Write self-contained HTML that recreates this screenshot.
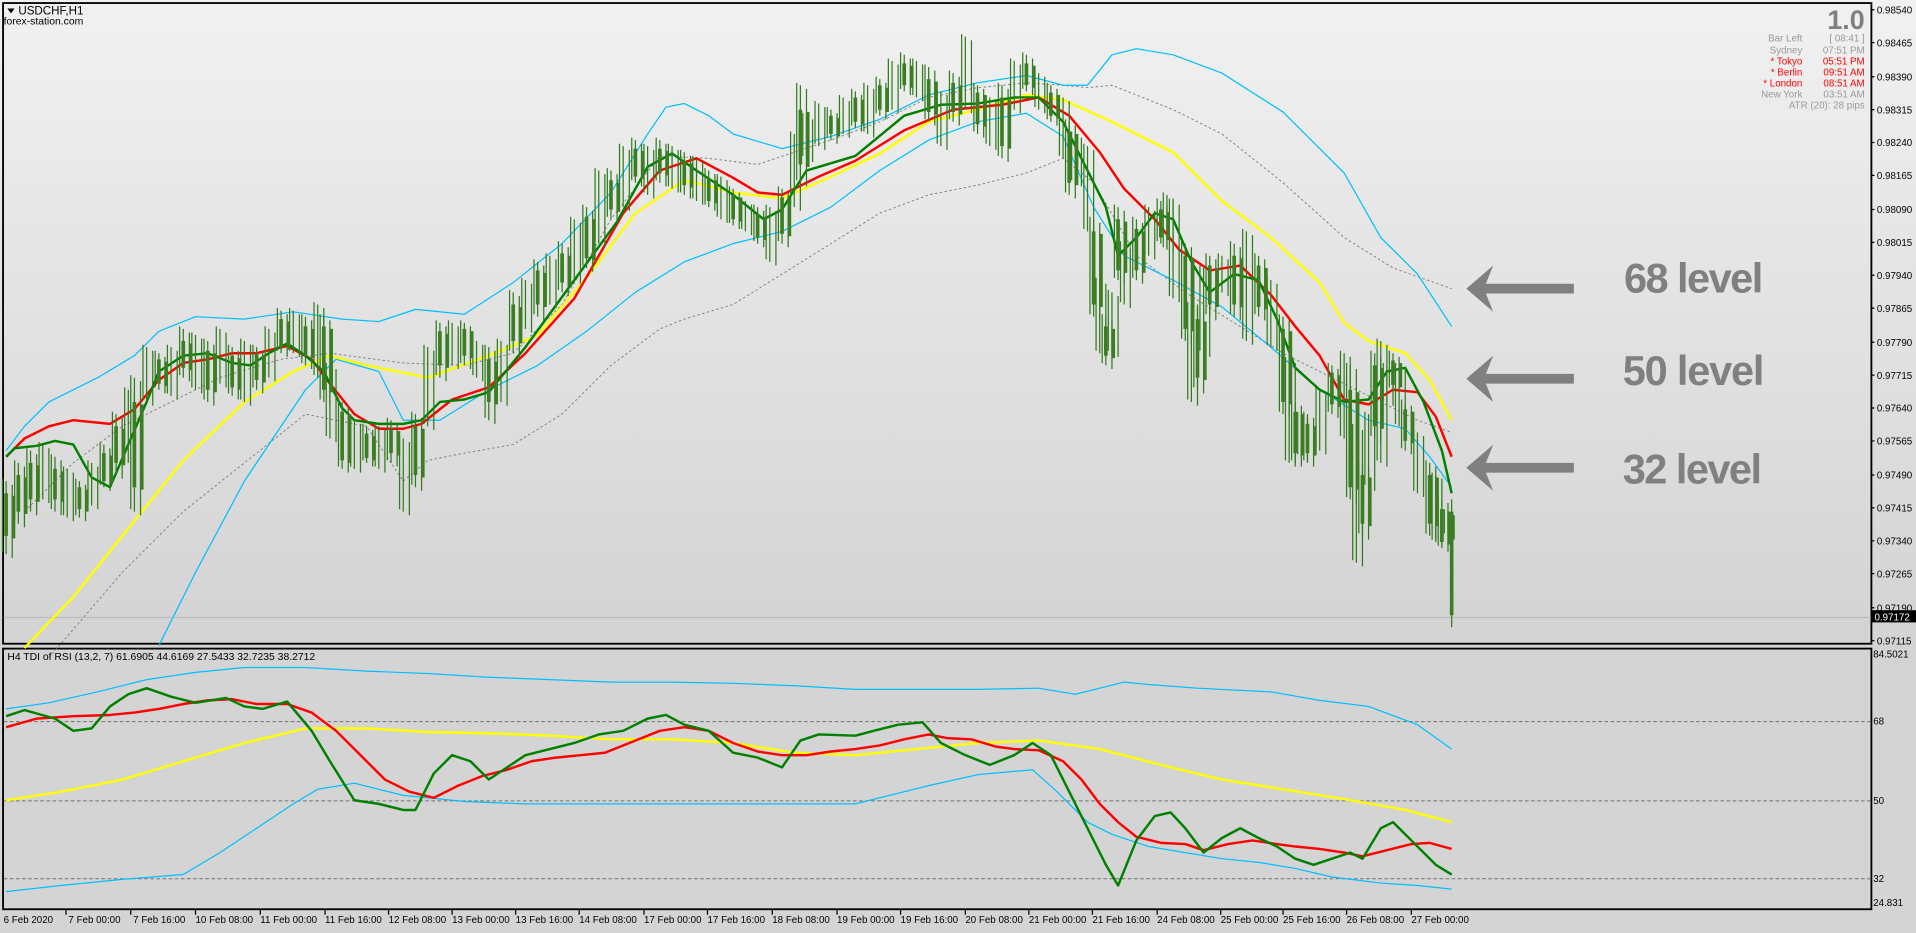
<!DOCTYPE html>
<html><head><meta charset="utf-8"><style>
html,body{margin:0;padding:0;width:1916px;height:933px;overflow:hidden;background:#d4d4d4}
svg{display:block}
text{font-family:"Liberation Sans",sans-serif}
</style></head><body>
<svg width="1916" height="933" viewBox="0 0 1568 766" preserveAspectRatio="none" xmlns="http://www.w3.org/2000/svg">
<defs><linearGradient id="bg" x1="0" y1="0" x2="0" y2="1"><stop offset="0" stop-color="#f1f1f1"/><stop offset="1" stop-color="#d3d3d3"/></linearGradient></defs>
<rect x="0" y="0" width="1568" height="531" fill="url(#bg)"/>
<rect x="0" y="531" width="1568" height="235" fill="#d4d4d4"/>
<rect x="2.5" y="2.5" width="1529" height="526" fill="none" stroke="#000" stroke-width="1.5"/>
<rect x="2.5" y="532.5" width="1529" height="214" fill="none" stroke="#000" stroke-width="1.5"/>
<line x1="3" y1="507" x2="1531" y2="507" stroke="#bdbdbd" stroke-width="1"/>
<g fill="none" stroke-linejoin="round">
<polyline stroke="#808080" stroke-width="0.8" stroke-dasharray="2,2" points="20,420 60,380 100,350 140,330 180,310 230,295 270,290 330,298 380,300 420,290 460,250 500,180 540,128 580,130 620,135 680,115 720,100 760,80 800,72 840,68 870,70 890,72 910,70 960,90 1000,110 1050,150 1100,195 1140,220 1188,237"/>
<polyline stroke="#808080" stroke-width="0.8" stroke-dasharray="2,2" points="40,540 100,470 150,420 200,380 250,340 300,350 330,395 350,378 380,372 420,365 460,340 500,300 540,270 560,262 600,250 640,225 680,200 720,175 760,160 800,152 840,142 870,130 895,150 930,210 970,240 1010,265 1050,290 1090,310 1130,330 1160,345 1188,355"/>
<polyline stroke="#00bfff" stroke-width="1" points="5,370 20,350 40,330 80,310 110,292 130,272 160,260 200,262 240,256 280,262 310,264 340,254 380,258 420,232 460,200 500,158 530,110 545,88 560,85 580,95 600,110 640,122 680,112 720,98 760,78 800,68 840,62 870,70 890,70 910,45 930,40 960,45 1000,60 1050,92 1100,142 1130,195 1160,225 1188,268"/>
<polyline stroke="#00bfff" stroke-width="1" points="130,530 160,470 200,395 250,320 275,295 310,305 330,345 360,345 400,320 440,300 480,272 520,240 560,215 600,200 640,190 680,170 720,140 760,115 800,100 840,93 870,112 895,170 920,210 960,230 1000,252 1040,285 1080,320 1120,345 1150,352 1170,375 1188,400"/>
<polyline stroke="#ffff00" stroke-width="2" points="20,532 60,490 100,440 150,378 200,330 240,305 270,292 300,300 350,310 400,292 440,275 480,228 520,175 560,148 600,158 640,163 680,145 720,126 760,100 800,90 840,78 870,82 910,100 960,125 1000,165 1040,195 1080,232 1100,265 1120,280 1150,290 1170,312 1188,345"/>
<polyline stroke="#ff0000" stroke-width="2" points="5,375 20,360 40,350 60,345 90,348 110,336 130,312 150,298 170,295 190,290 210,290 235,284 255,295 270,315 290,340 310,352 330,352 345,348 370,328 400,318 430,290 470,245 510,175 540,140 570,130 600,146 620,158 640,160 670,145 700,132 740,107 780,90 820,86 850,80 875,95 900,125 920,155 945,180 965,205 990,222 1015,218 1040,242 1060,268 1080,292 1100,328 1120,332 1140,320 1160,322 1175,342 1188,375"/>
<polyline stroke="#008000" stroke-width="2" points="5,375 12,368 30,366 45,362 60,365 75,392 90,400 105,365 120,330 130,305 150,292 170,290 190,298 205,300 220,290 235,282 250,292 265,305 280,335 290,345 310,348 330,348 345,345 360,330 380,328 400,322 430,285 470,230 505,182 530,137 550,126 570,140 600,160 625,180 640,172 660,140 700,128 740,95 770,86 800,85 830,80 850,80 870,100 890,140 905,170 915,210 930,195 945,175 960,180 975,215 990,240 1010,225 1030,230 1045,262 1060,302 1080,320 1100,330 1120,328 1135,305 1150,302 1165,330 1180,370 1188,405"/>
</g>
<path id="wk" fill="none" stroke="#2f7a1d" stroke-width="1" d="M5 395V455M15 380V430M25 370V420M35 365V410M45 375V420M55 385V425M65 395V425M75 380V415M85 365V400M95 340V390M105 320V380M110 310V420M120 285V330M130 290V320M140 285V325M150 270V310M160 275V320M170 280V330M180 270V315M190 285V325M200 280V330M210 285V320M220 270V310M230 255V290M240 255V290M250 260V300M260 250V310M265 260V330M270 300V360M280 330V385M290 345V385M300 350V380M310 350V385M320 345V380M330 360V420M340 340V400M350 285V350M360 265V310M370 265V300M380 265V300M390 280V310M400 285V345M410 280V330M420 240V290M430 230V270M440 215V260M450 210V250M460 200V240M470 180V230M480 170V220M490 140V200M500 140V180M510 120V170M520 115V150M530 120V160M540 115V150M550 120V155M560 125V160M570 130V165M580 140V170M590 145V180M600 155V185M610 165V190M620 170V200M630 170V215M640 155V200M650 110V170M655 70V150M660 95V130M670 85V120M680 90V115M690 80V110M700 75V105M710 70V110M720 65V95M730 50V90M740 45V75M750 50V80M760 55V100M770 75V120M780 60V100M790 30V90M800 70V110M810 80V120M820 70V130M830 50V90M840 45V75M850 60V90M860 70V100M870 80V130M875 100V160M880 110V150M890 120V190M895 180V260M900 230V290M905 260V300M910 240V290M915 170V230M920 200V250M930 180V230M940 170V210M950 165V200M955 160V205M960 165V245M970 200V280M975 250V330M980 250V320M985 220V290M990 210V260M1000 210V240M1010 200V260M1020 190V280M1030 210V260M1040 230V285M1050 260V340M1055 295V380M1060 330V380M1065 340V375M1070 340V380M1080 320V370M1090 300V340M1100 290V360M1105 300V410M1110 350V462M1115 380V440M1120 340V400M1125 290V360M1130 280V380M1135 300V330M1140 290V320M1145 300V350M1150 330V370M1160 355V405M1170 380V440M1175 390V445M1180 410V450M1185 420V440"/>
<use href="#wk" transform="translate(5,3)"/>
<use href="#wk" transform="translate(-3,-2)"/>
<path fill="none" stroke="#2f7a1d" stroke-width="1" d="M1188 410V515"/>
<path id="bd" fill="none" stroke="#3b7d22" stroke-width="3" d="M5 405V440M15 390V420M25 380V410M45 385V410M65 400V418M85 372V395M95 350V380M110 330V400M130 295V315M150 280V302M170 288V320M190 292V318M210 290V312M230 262V285M250 268V292M265 268V320M280 338V378M300 356V376M320 352V372M340 350V390M360 272V300M380 270V292M400 295V330M420 250V280M440 222V250M460 208V232M480 178V212M500 148V172M520 122V145M540 122V142M560 132V152M580 146V165M600 160V180M620 176V195M640 162V192M655 90V135M680 95V110M700 80V100M720 70V90M740 52V70M760 65V92M780 68V92M800 76V102M820 80V120M840 52V70M860 76V95M875 108V150M895 190V250M905 268V292M915 180V222M930 188V222M950 172V195M970 210V270M980 262V310M990 218V250M1010 210V250M1030 218V252M1050 270V330M1060 338V372M1070 348V372M1090 306V332M1105 320V400M1115 390V430M1125 300V350M1140 296V316M1150 336V362M1170 390V430M1180 418V445"/>
<use href="#bd" transform="translate(6,2)"/>
<path fill="none" stroke="#3b7d22" stroke-width="3" d="M1188 420V505"/>
<g stroke="#707070" stroke-width="0.8" stroke-dasharray="3,2">
<line x1="3" y1="592.5" x2="1531" y2="592.5"/>
<line x1="3" y1="657.5" x2="1531" y2="657.5"/>
<line x1="3" y1="721.5" x2="1531" y2="721.5"/>
</g>
<g fill="none" stroke-linejoin="round">
<polyline stroke="#00bfff" stroke-width="1" points="5,582 40,577 80,568 120,558 160,552 200,548 250,548 300,551 350,553 400,556 450,558 500,560 550,560 600,561 650,563 700,566 750,566 800,566 850,565 880,570 900,565 920,560 940,562 980,565 1040,568 1080,575 1120,580 1160,595 1188,615"/>
<polyline stroke="#00bfff" stroke-width="1" points="5,732 50,727 100,722 150,718 180,700 210,680 240,660 260,648 290,643 330,653 380,658 430,660 500,660 570,660 640,660 700,660 760,645 800,636 845,632 865,650 890,675 910,685 940,695 970,700 1000,705 1030,708 1060,713 1090,720 1130,725 1160,727 1188,730"/>
<polyline stroke="#ffff00" stroke-width="2" points="5,657 50,650 100,640 150,625 200,610 250,598 300,598 350,601 400,602 450,604 500,607 550,607 600,610 650,618 700,620 750,615 800,610 850,608 900,615 950,628 1000,640 1050,648 1100,656 1150,665 1188,675"/>
<polyline stroke="#ff0000" stroke-width="2" points="5,597 30,590 60,588 90,587 110,585 130,582 150,578 170,575 190,574 210,578 235,578 255,585 275,600 295,620 315,640 335,650 355,655 375,645 395,637 415,632 435,625 455,622 475,620 495,618 515,610 540,600 560,597 580,600 600,610 620,617 640,620 660,620 680,617 700,615 720,612 740,607 760,603 775,606 795,607 815,613 830,615 850,616 870,625 885,640 900,660 915,675 930,687 950,692 970,693 985,698 1005,693 1025,690 1045,693 1060,695 1080,697 1100,700 1115,703 1135,698 1155,693 1170,692 1188,697"/>
<polyline stroke="#008000" stroke-width="2" points="5,588 20,583 45,590 60,600 75,598 90,580 105,570 120,565 140,572 160,577 185,573 200,580 215,582 235,576 255,600 270,625 290,657 310,660 330,665 340,665 355,635 370,620 385,625 400,640 415,630 430,620 450,615 470,610 490,603 510,600 530,590 545,587 560,595 580,600 600,618 620,622 640,630 655,608 670,603 700,604 715,600 735,595 755,593 770,610 790,620 810,628 830,620 845,610 860,620 875,650 890,680 905,710 915,727 930,690 945,670 958,667 970,680 985,700 1000,688 1015,680 1030,688 1045,695 1060,705 1075,710 1090,705 1105,700 1115,705 1130,680 1140,675 1155,690 1175,710 1188,718"/>
</g>
<g fill="#808080">
<path d="M1200 237 L1222 218 L1216 233 L1288 233 L1288 241 L1216 241 L1222 256 Z"/>
<path d="M1200 311 L1222 292 L1216 307 L1288 307 L1288 315 L1216 315 L1222 330 Z"/>
<path d="M1200 384 L1222 365 L1216 380 L1288 380 L1288 388 L1216 388 L1222 403 Z"/>
</g>
<g fill="#808080" font-weight="bold" font-size="34">
<text x="1329" y="240" textLength="114">68 level</text>
<text x="1328" y="316" textLength="116">50 level</text>
<text x="1328" y="397" textLength="114">32 level</text>
</g>
<path d="M6 7 L12 7 L9 11 Z" fill="#000"/>
<text x="15" y="12" font-size="9.5" fill="#000">USDCHF,H1</text>
<text x="3" y="20" font-size="8.5" fill="#000">forex-station.com</text>
<text x="6" y="542" font-size="8.5" fill="#000">H4 TDI of RSI  (13,2, 7) 61.6905 44.6169 27.5433 32.7235 38.2712</text>
<text x="1526" y="24" font-size="22" font-weight="bold" fill="#808080" text-anchor="end">1.0</text>
<g font-size="8" text-anchor="end">
<text x="1475" y="34" fill="#999">Bar Left</text><text x="1526" y="34" fill="#999">[ 08:41 ]</text>
<text x="1475" y="44" fill="#999">Sydney</text><text x="1526" y="44" fill="#999">07:51 PM</text>
<text x="1475" y="53" fill="#ff0000">* Tokyo</text><text x="1526" y="53" fill="#ff0000">05:51 PM</text>
<text x="1475" y="62" fill="#ff0000">* Berlin</text><text x="1526" y="62" fill="#ff0000">09:51 AM</text>
<text x="1475" y="71" fill="#ff0000">* London</text><text x="1526" y="71" fill="#ff0000">08:51 AM</text>
<text x="1475" y="80" fill="#999">New York</text><text x="1526" y="80" fill="#999">03:51 AM</text>
<text x="1526" y="89" fill="#999">ATR (20): 28 pips</text>
</g>
<g font-size="8" fill="#000">
<text x="1536" y="11">0.98540</text><text x="1536" y="38">0.98465</text><text x="1536" y="66">0.98390</text><text x="1536" y="93">0.98315</text><text x="1536" y="120">0.98240</text><text x="1536" y="147">0.98165</text><text x="1536" y="175">0.98090</text><text x="1536" y="202">0.98015</text><text x="1536" y="229">0.97940</text><text x="1536" y="256">0.97865</text><text x="1536" y="284">0.97790</text><text x="1536" y="311">0.97715</text><text x="1536" y="338">0.97640</text><text x="1536" y="365">0.97565</text><text x="1536" y="393">0.97490</text><text x="1536" y="420">0.97415</text><text x="1536" y="447">0.97340</text><text x="1536" y="474">0.97265</text><text x="1536" y="502">0.97190</text><text x="1536" y="529">0.97115</text>
<text x="1533" y="540">84.5021</text><text x="1533" y="595">68</text><text x="1533" y="660">50</text><text x="1533" y="724">32</text><text x="1533" y="744">24.831</text>
</g>
<g stroke="#000" stroke-width="1">
<path d="M1531 8H1534M1531 35H1534M1531 63H1534M1531 90H1534M1531 117H1534M1531 144H1534M1531 172H1534M1531 199H1534M1531 226H1534M1531 253H1534M1531 281H1534M1531 308H1534M1531 335H1534M1531 362H1534M1531 390H1534M1531 417H1534M1531 444H1534M1531 471H1534M1531 499H1534M1531 526H1534"/>
</g>
<rect x="1532" y="501" width="36" height="10" fill="#000"/>
<text x="1534" y="509.5" font-size="8" fill="#fff">0.97172</text>
<g stroke="#000" stroke-width="1"><path d="M54 747V751M107 747V751M160 747V751M213 747V751M266 747V751M318 747V751M370 747V751M422 747V751M474 747V751M527 747V751M579 747V751M632 747V751M685 747V751M737 747V751M790 747V751M842 747V751M894 747V751M947 747V751M999 747V751M1050 747V751M1102 747V751M1155 747V751"/></g>
<g font-size="8" fill="#000">
<text x="3" y="758">6 Feb 2020</text><text x="56" y="758">7 Feb 00:00</text><text x="109" y="758">7 Feb 16:00</text><text x="160" y="758">10 Feb 08:00</text><text x="213" y="758">11 Feb 00:00</text><text x="266" y="758">11 Feb 16:00</text><text x="318" y="758">12 Feb 08:00</text><text x="370" y="758">13 Feb 00:00</text><text x="422" y="758">13 Feb 16:00</text><text x="474" y="758">14 Feb 08:00</text><text x="527" y="758">17 Feb 00:00</text><text x="579" y="758">17 Feb 16:00</text><text x="632" y="758">18 Feb 08:00</text><text x="685" y="758">19 Feb 00:00</text><text x="737" y="758">19 Feb 16:00</text><text x="790" y="758">20 Feb 08:00</text><text x="842" y="758">21 Feb 00:00</text><text x="894" y="758">21 Feb 16:00</text><text x="947" y="758">24 Feb 08:00</text><text x="999" y="758">25 Feb 00:00</text><text x="1050" y="758">25 Feb 16:00</text><text x="1102" y="758">26 Feb 08:00</text><text x="1155" y="758">27 Feb 00:00</text>
</g>
</svg>
</body></html>
